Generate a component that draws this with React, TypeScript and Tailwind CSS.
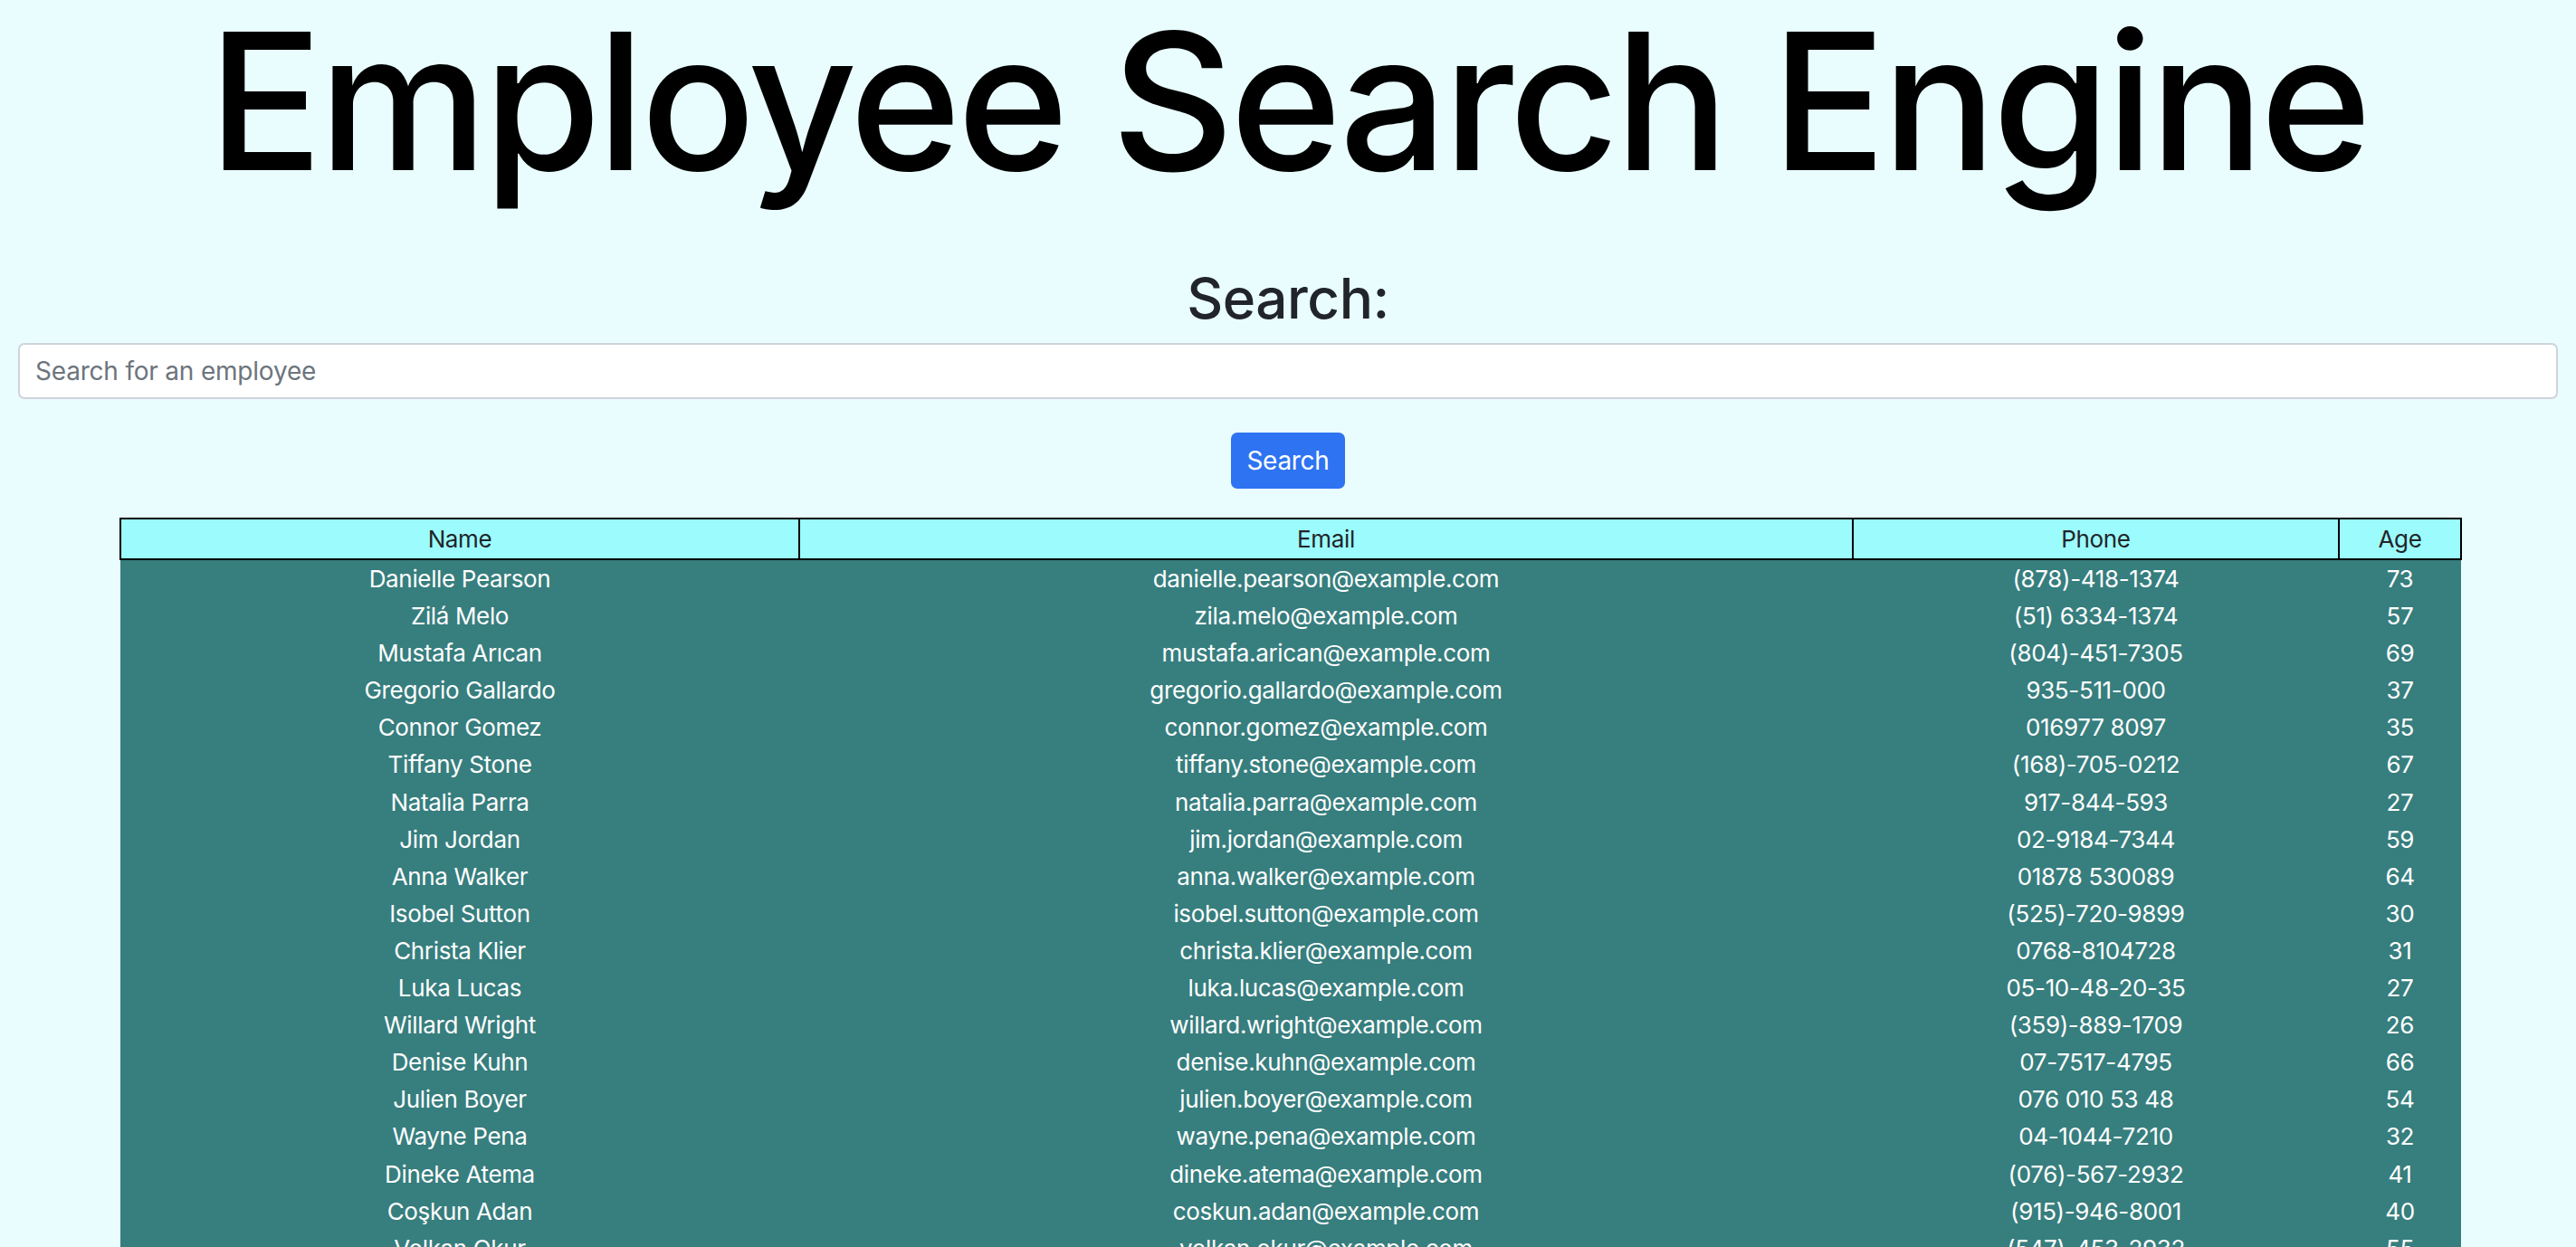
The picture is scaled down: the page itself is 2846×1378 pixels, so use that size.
import React from "react";

const rows: [string, string, string, string][] = [
  ["Danielle Pearson", "danielle.pearson@example.com", "(878)-418-1374", "73"],
  ["Zilá Melo", "zila.melo@example.com", "(51) 6334-1374", "57"],
  ["Mustafa Arıcan", "mustafa.arican@example.com", "(804)-451-7305", "69"],
  ["Gregorio Gallardo", "gregorio.gallardo@example.com", "935-511-000", "37"],
  ["Connor Gomez", "connor.gomez@example.com", "016977 8097", "35"],
  ["Tiffany Stone", "tiffany.stone@example.com", "(168)-705-0212", "67"],
  ["Natalia Parra", "natalia.parra@example.com", "917-844-593", "27"],
  ["Jim Jordan", "jim.jordan@example.com", "02-9184-7344", "59"],
  ["Anna Walker", "anna.walker@example.com", "01878 530089", "64"],
  ["Isobel Sutton", "isobel.sutton@example.com", "(525)-720-9899", "30"],
  ["Christa Klier", "christa.klier@example.com", "0768-8104728", "31"],
  ["Luka Lucas", "luka.lucas@example.com", "05-10-48-20-35", "27"],
  ["Willard Wright", "willard.wright@example.com", "(359)-889-1709", "26"],
  ["Denise Kuhn", "denise.kuhn@example.com", "07-7517-4795", "66"],
  ["Julien Boyer", "julien.boyer@example.com", "076 010 53 48", "54"],
  ["Wayne Pena", "wayne.pena@example.com", "04-1044-7210", "32"],
  ["Dineke Atema", "dineke.atema@example.com", "(076)-567-2932", "41"],
  ["Coşkun Adan", "coskun.adan@example.com", "(915)-946-8001", "40"],
  ["Volkan Okur", "volkan.okur@example.com", "(547)-453-2932", "55"],
  ["Lily Clark", "lily.clark@example.com", "(272)-811-4467", "48"],
  ["Ellie Scott", "ellie.scott@example.com", "016974 54321", "29"],
];

export default function App() {
  return (
    <div
      className="min-h-screen bg-[#e9fdff] text-[#212529]"
      style={{ fontFamily: "Inter, 'Noto Sans', 'Liberation Sans', sans-serif" }}
    >
      <h1 className="m-0 text-center text-[210px] leading-[224px] font-medium text-black tracking-[-4.5px]">
        Employee Search Engine
      </h1>
      <div className="px-[20px] pt-[69px]">
        <h2 className="m-0 text-center text-[62px] leading-[74px] font-medium text-[#212529] tracking-[-0.5px]">
          Search:
        </h2>
        <input
          type="text"
          placeholder="Search for an employee"
          className="mt-[12px] block w-full h-[62px] rounded-[7px] border-2 border-[#ced4da] bg-white pl-[17px] text-[28px] text-[#212529] placeholder:text-[#6c757d] outline-none tracking-[-0.2px]"
        />
        <div className="flex justify-center mt-[37px]">
          <button className="h-[62px] w-[126px] rounded-[7px] bg-[#2e73f2] text-[28px] text-white tracking-[-0.3px]">
            Search
          </button>
        </div>
      </div>
      <table className="mt-[32px] ml-[132px] w-[2586px] table-fixed border-collapse text-[26px] tracking-[-0.35px]">
        <colgroup>
          <col className="w-[750px]" />
          <col className="w-[1164px]" />
          <col className="w-[537px]" />
          <col className="w-[135px]" />
        </colgroup>
        <thead>
          <tr className="bg-[#9cfcfd]">
            <th className="border-2 border-black font-normal h-[45px] leading-[41px] text-[#212529]">Name</th>
            <th className="border-2 border-black font-normal h-[45px] leading-[41px] text-[#212529]">Email</th>
            <th className="border-2 border-black font-normal h-[45px] leading-[41px] text-[#212529]">Phone</th>
            <th className="border-2 border-black font-normal h-[45px] leading-[41px] text-[#212529]">Age</th>
          </tr>
        </thead>
        <tbody>
          {rows.map((r, i) => (
            <tr key={i} className="bg-[#377e7e] text-white">
              {r.map((c, j) => (
                <td key={j} className="p-0 text-center leading-[41.1px] h-[41.1px]">
                  {c}
                </td>
              ))}
            </tr>
          ))}
        </tbody>
      </table>
    </div>
  );
}
